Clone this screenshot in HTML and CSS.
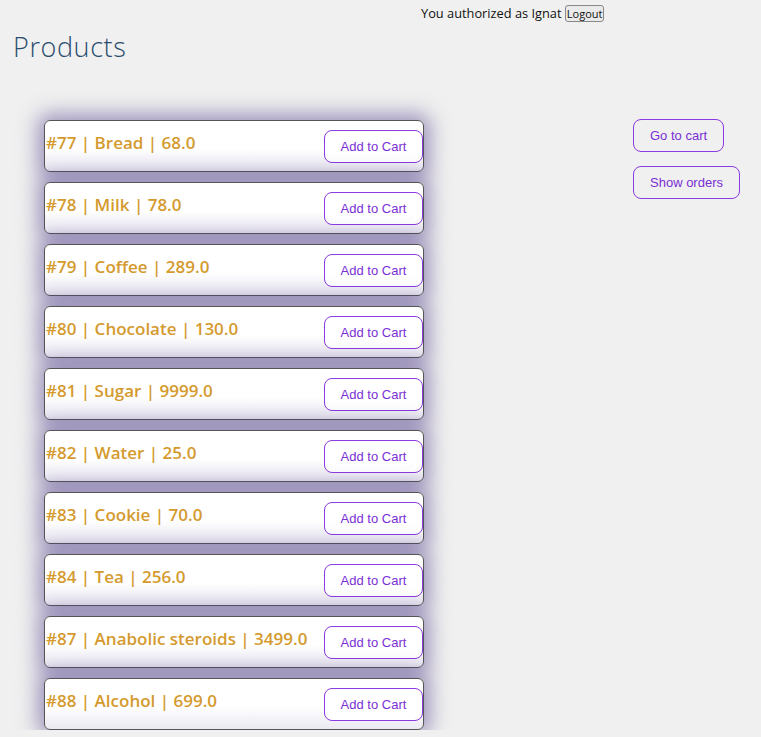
FILE: index.html
```html
<!DOCTYPE html>
<html>
<head>
<meta charset="utf-8">
<link rel="stylesheet" href="styles.css">
</head>
<body>
<div class="topbar">You authorized as Ignat <button class="logout">Logout</button></div>
<h1 class="title">Products</h1>
<div class="main">
  <div class="list">
    <div class="card"><span class="name">#77 | Bread | 68.0</span><button class="btn">Add to Cart</button></div>
    <div class="card"><span class="name">#78 | Milk | 78.0</span><button class="btn">Add to Cart</button></div>
    <div class="card"><span class="name">#79 | Coffee | 289.0</span><button class="btn">Add to Cart</button></div>
    <div class="card"><span class="name">#80 | Chocolate | 130.0</span><button class="btn">Add to Cart</button></div>
    <div class="card"><span class="name">#81 | Sugar | 9999.0</span><button class="btn">Add to Cart</button></div>
    <div class="card"><span class="name">#82 | Water | 25.0</span><button class="btn">Add to Cart</button></div>
    <div class="card"><span class="name">#83 | Cookie | 70.0</span><button class="btn">Add to Cart</button></div>
    <div class="card"><span class="name">#84 | Tea | 256.0</span><button class="btn">Add to Cart</button></div>
    <div class="card"><span class="name">#87 | Anabolic steroids | 3499.0</span><button class="btn">Add to Cart</button></div>
    <div class="card"><span class="name">#88 | Alcohol | 699.0</span><button class="btn">Add to Cart</button></div>
  </div>
  <div class="side">
    <button class="btn side-btn">Go to cart</button>
    <button class="btn side-btn">Show orders</button>
  </div>
</div>
</body>
</html>
```
FILE: styles.css
```css
html, body {
  margin: 0;
  padding: 0;
  background: #f0f0f0;
}
body {
  font-family: "Open Sans", sans-serif;
  overflow: hidden;
}
.topbar {
  padding: 4px 0 0 421px;
  font-size: 12.8px;
  color: #111;
  height: 18px;
  line-height: 18px;
}
.logout {
  font-family: "Open Sans", sans-serif;
  font-size: 11px;
  padding: 0 1px;
  height: 17px;
  line-height: 14px;
  border: 1px solid #888;
  border-radius: 3px;
  background: #eaeaea;
  color: #111;
  vertical-align: top;
  margin-top: 1px;
}
.title {
  margin: 8px 0 0 13px;
  font-size: 27px;
  font-weight: 300;
  letter-spacing: 0.6px;
  color: #2a4d6e;
  line-height: 34px;
  height: 34px;
}
.main {
  display: flex;
  padding: 56px 0 0 44px;
}
.list {
  display: flex;
  flex-direction: column;
  gap: 10px;
  width: 380px;
}
.card {
  box-sizing: border-box;
  height: 52px;
  border: 1px solid #555;
  border-radius: 6px;
  background: linear-gradient(to bottom, #ffffff 55%, #ebe9f2 100%);
  box-shadow: 0 0 20px 6px rgba(75, 55, 135, 0.5);
  display: flex;
  justify-content: space-between;
  align-items: flex-start;
  padding: 0 0 0 1px;
}
.name {
  color: #d49a2e;
  font-size: 17px;
  font-weight: 600;
  margin-top: 10px;
}
.btn {
  font-family: "Liberation Sans", Arial, sans-serif;
  font-size: 13px;
  color: #7a2fd6;
  background: #fff;
  border: 1px solid #8a3be2;
  border-radius: 8px;
  cursor: pointer;
}
.card .btn {
  width: 99px;
  height: 33px;
  margin-top: 9px;
  padding: 0;
}
.side {
  display: flex;
  flex-direction: column;
  align-items: flex-start;
  gap: 14px;
  margin: -1px 0 0 209px;
}
.side-btn {
  height: 33px;
  padding: 0 16px;
  background: transparent;
}
```
